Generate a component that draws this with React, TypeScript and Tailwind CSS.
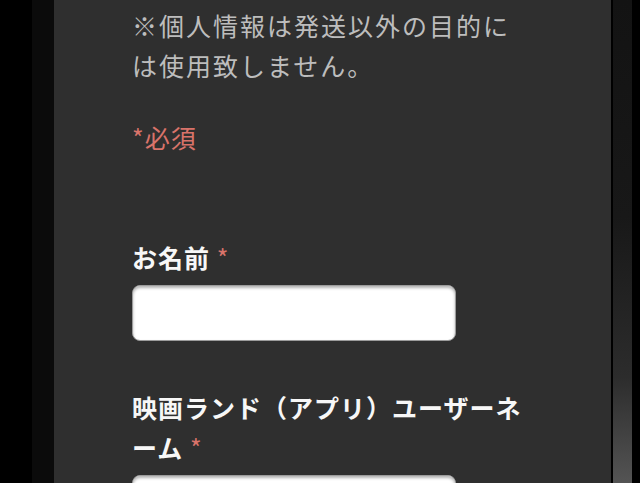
import React from "react";

const jp = { fontFamily: '"Noto Sans CJK JP", "Noto Sans", sans-serif' };

function Field({ label }: { label: string }) {
  return (
    <div className="flex flex-col">
      <label className="text-[25px] font-bold leading-[40px] tracking-[1px] text-[#f7f7f7]">
        {label}{" "}
        <span className="font-normal text-[#d9736a]">*</span>
      </label>
      <input
        type="text"
        className="mt-[8px] h-[56px] w-[324px] rounded-[8px] border border-[#9c9c9c] bg-white shadow-[inset_0_2px_3px_rgba(0,0,0,0.3)] outline-none"
      />
    </div>
  );
}

export default function App() {
  return (
    <div className="flex h-[483px] w-[640px] overflow-hidden bg-black" style={jp}>
      <div className="w-[32px] bg-black" />
      <div className="w-[22px] bg-[#0b0b0b]" />
      <main className="flex w-[557px] flex-col bg-[#2f2f2f] px-[78px] pt-[5px]">
        <p className="text-[25px] leading-[40px] tracking-[2px] text-[#bdbdbd]">
          ※個人情報は発送以外の目的には使用致しません。
        </p>
        <p className="mt-[32px] text-[25px] leading-[40px] tracking-[1px] text-[#d9736a]">
          *必須
        </p>
        <div className="mt-[80px]">
          <Field label="お名前" />
        </div>
        <div className="mt-[46px]">
          <Field label="映画ランド（アプリ）ユーザーネーム" />
        </div>
      </main>
      <div className="w-[2px] bg-black" />
      <div className="w-[19px] bg-[linear-gradient(to_bottom,#131313_0%,#181818_45%,#2c2c2c_78%,#545454_100%)]" />
      <div className="w-[8px] bg-black" />
    </div>
  );
}
